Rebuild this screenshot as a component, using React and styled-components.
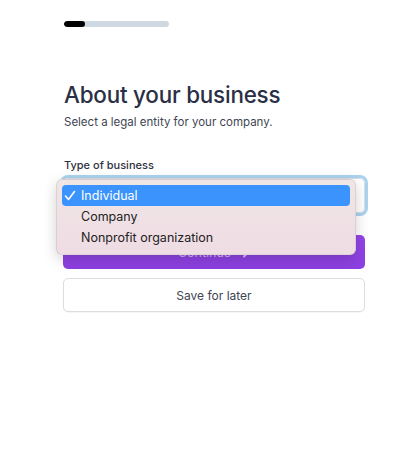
import React from 'react'
import styled, { createGlobalStyle } from 'styled-components'

const GlobalStyle = createGlobalStyle`
  html, body {
    margin: 0;
    background: #ffffff;
    font-family: Inter, 'Noto Sans', sans-serif;
  }
`

const Page = styled.div`
  width: 418px;
  height: 460px;
  box-sizing: border-box;
  padding: 21px 53px 0 63px;
`

const Progress = styled.div`
  display: flex;
  width: 105px;
  height: 6px;
  margin-left: 1px;
  border-radius: 3px;
  overflow: hidden;
  background: #cfd7e0;
`

const ProgressFill = styled.div`
  height: 100%;
  background: #000;
  border-radius: 3px;
`

const Title = styled.h1`
  margin: 54px 0 0 1px;
  font-size: 22.4px;
  font-weight: 500;
  letter-spacing: -0.2px;
  color: #2a2f45;
`

const Subtitle = styled.p`
  margin: 7px 0 0 1px;
  font-size: 11.5px;
  color: #414552;
`

const Label = styled.label`
  display: block;
  margin: 29px 0 0 1px;
  font-size: 11px;
  font-weight: 500;
  color: #30313d;
`

const SelectWrap = styled.div`
  position: relative;
  margin-top: 6px;
`

const SelectBox = styled.div`
  height: 35px;
  box-sizing: border-box;
  border: 1px solid #dadde2;
  border-radius: 5px;
  box-shadow: 0 0 0 3px #a9d3ef;
`

const Menu = styled.ul`
  position: absolute;
  top: 1px;
  left: -7px;
  width: 300px;
  box-sizing: border-box;
  margin: 0;
  padding: 5px 5px 6px;
  list-style: none;
  border-radius: 6px;
  background: linear-gradient(180deg, #efe6e5 0%, #efdce4 100%);
  border: 1px solid rgba(0, 0, 0, 0.08);
  box-shadow: 0 4px 14px rgba(0, 0, 0, 0.18);
  z-index: 2;
`

const Option = styled.li`
  display: flex;
  align-items: center;
  height: 21px;
  padding-left: 2px;
  border-radius: 4px;
  font-size: 12.5px;
  color: ${p => (p.selected ? '#ffffff' : '#222')};
  background: ${p => (p.selected ? '#3b93fe' : 'transparent')};
`

const Check = styled.span`
  width: 17px;
  display: inline-flex;
  align-items: center;
`

const Primary = styled.button`
  display: flex;
  align-items: center;
  justify-content: center;
  gap: 6px;
  width: 302px;
  height: 34px;
  margin-top: 22px;
  border: none;
  border-radius: 5px;
  background: linear-gradient(180deg, #9446e8 0%, #8c3fe0 100%);
  color: rgba(255, 255, 255, 0.6);
  font-family: inherit;
  font-size: 12.5px;
`

const Secondary = styled.button`
  width: 302px;
  height: 34px;
  margin-top: 9px;
  border: 1px solid #dcdde1;
  border-radius: 5px;
  background: #fff;
  color: #414552;
  font-family: inherit;
  font-size: 12px;
  box-shadow: 0 1px 1px rgba(0, 0, 0, 0.04);
`

const options = ['Individual', 'Company', 'Nonprofit organization']

export default function App () {
  return (
    <Page>
      <GlobalStyle />
      <Progress>
        <ProgressFill style={{ width: '20%' }} />
      </Progress>
      <Title>About your business</Title>
      <Subtitle>Select a legal entity for your company.</Subtitle>
      <Label>Type of business</Label>
      <SelectWrap>
        <SelectBox />
        <Menu>
          {options.map((o, i) => (
            <Option key={o} selected={i === 0}>
              <Check>
                {i === 0 && (
                  <svg width='12' height='11' viewBox='0 0 12 11' fill='none'>
                    <path d='M1.5 6 L4.5 9.5 L10.5 1.5' stroke='#fff' strokeWidth='1.6' strokeLinecap='round' strokeLinejoin='round' />
                  </svg>
                )}
              </Check>
              {o}
            </Option>
          ))}
        </Menu>
      </SelectWrap>
      <Primary>
        Continue
        <svg width='13' height='11' viewBox='0 0 13 11' fill='none'>
          <path d='M1 5.5 H11 M7 1.5 L11 5.5 L7 9.5' stroke='rgba(255,255,255,0.7)' strokeWidth='1.8' strokeLinecap='round' strokeLinejoin='round' />
        </svg>
      </Primary>
      <Secondary>Save for later</Secondary>
    </Page>
  )
}
